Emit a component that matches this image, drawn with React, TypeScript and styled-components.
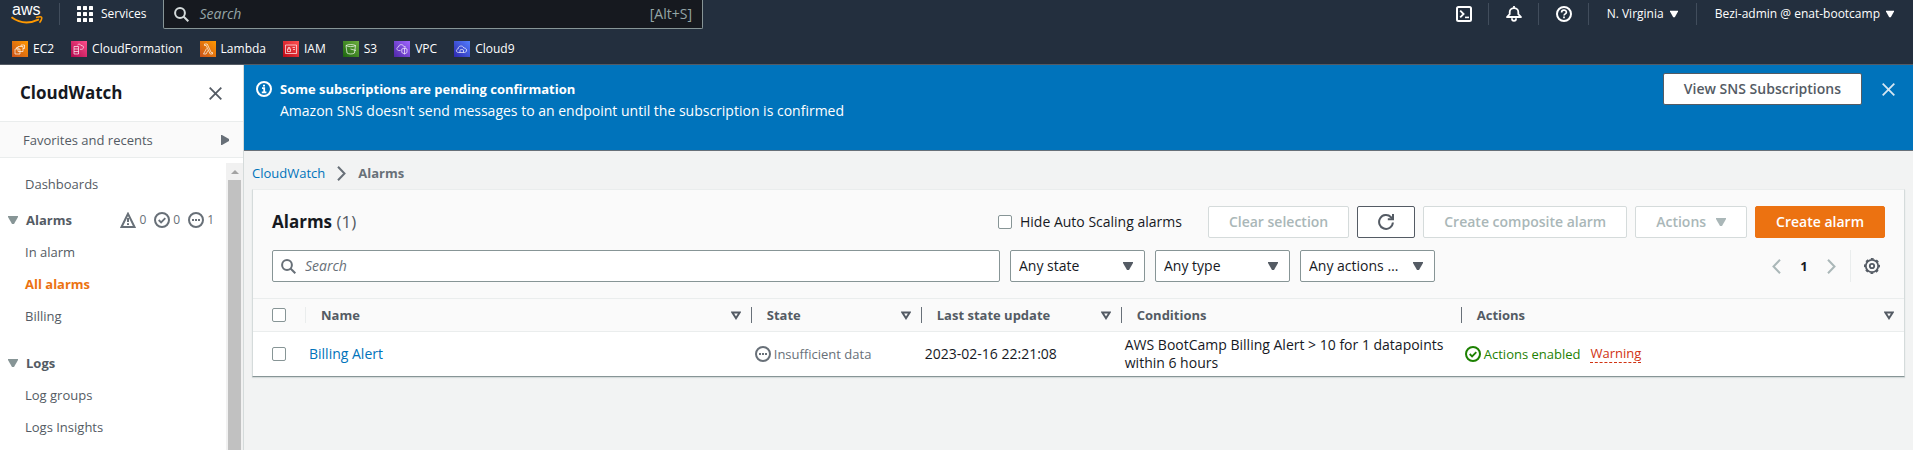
import React from "react";
import styled, { createGlobalStyle, css } from "styled-components";

const font = '"Open Sans", "Noto Sans", sans-serif';

const GlobalStyle = createGlobalStyle`
  *, *::before, *::after { box-sizing: border-box; }
  body { margin: 0; background: #f2f3f3; color: #16191f; font: 14px/22px ${font}; }
  button, input, select { font: inherit; color: inherit; margin: 0; }
  button { cursor: pointer; }
  a { text-decoration: none; }
  svg { display: block; flex: none; }
`;

const Shell = styled.div`
  display: flex;
  flex-direction: column;
  min-height: 100vh;
`;

/* ---------- top navigation ---------- */

const TopNav = styled.header`
  background: #232f3e;
  color: #fff;
  border-bottom: 1px solid #545b64;
  font-size: 12px;
  line-height: 16px;
`;

const NavRow = styled.div`
  display: flex;
  justify-content: space-between;
  height: 32px;
`;

const NavSide = styled.div<{ $grow?: boolean }>`
  display: flex;
  align-items: flex-start;
  ${(p) => p.$grow && "flex: 0 1 703px; min-width: 0;"}
`;

const LogoLink = styled.a`
  display: flex;
  padding: 0 16px 0 11px;
`;

const NavButton = styled.button<{ $first?: boolean; $last?: boolean }>`
  display: flex;
  align-items: center;
  gap: 6px;
  height: 22px;
  margin: 3px 0 0;
  padding: 0 ${(p) => (p.$last ? 19 : 18)}px 0 18px;
  border: 0;
  border-left: ${(p) => (p.$first ? "0" : "1px solid #414d5c")};
  background: none;
  font-size: 12px;
  white-space: nowrap;
`;

const NavIconButton = styled(NavButton)`
  padding: 0 16px 0 17px;
`;

const ServicesButton = styled(NavButton)`
  gap: 8px;
  padding: 0 17px;
`;

const NavSearch = styled.label`
  display: flex;
  flex: 1;
  align-items: center;
  gap: 10px;
  height: 29px;
  padding: 0 10px;
  border: 1px solid #879596;
  border-top: 0;
  border-radius: 0 0 2px 2px;
  background: #16191f;
  color: #d5dbdb;
  min-width: 0;
`;

const NavSearchInput = styled.input`
  flex: 1;
  min-width: 0;
  padding: 0;
  border: 0;
  outline: 0;
  background: none;
  font-size: 14px;
  &::placeholder { color: #95a5a6; font-style: italic; opacity: 1; }
`;

const Shortcut = styled.span`
  color: #95a5a6;
  font-size: 14px;
`;

const Favorites = styled.nav`
  display: flex;
  gap: 17px;
  height: 32px;
  padding: 9px 12px 0;
`;

const Favorite = styled.a`
  display: flex;
  align-items: center;
  gap: 5px;
  height: 16px;
  color: #fff;
  font-size: 12px;
`;

/* ---------- side navigation ---------- */

const Body = styled.div`
  display: flex;
  flex: 1;
`;

const Sidebar = styled.aside`
  display: flex;
  flex-direction: column;
  flex: 0 0 244px;
  border-right: 1px solid #d5dbdb;
  background: #fff;
  color: #545b64;
`;

const SideHeader = styled.div`
  display: flex;
  align-items: center;
  justify-content: space-between;
  height: 57px;
  padding: 0 21px 0 20px;
  border-bottom: 1px solid #eaeded;
`;

const SideTitle = styled.h2`
  margin: 0;
  color: #16191f;
  font-size: 17px;
  font-weight: 700;
`;

const IconButton = styled.button<{ $color?: string }>`
  display: flex;
  padding: 0;
  border: 0;
  background: none;
  color: ${(p) => p.$color || "#545b64"};
`;

const FavoritesButton = styled.button`
  display: flex;
  align-items: center;
  justify-content: space-between;
  height: 36px;
  padding: 0 14px 0 23px;
  border: 0;
  border-bottom: 1px solid #eaeded;
  background: #fafafa;
  font-size: 13px;
`;

const SideScroll = styled.div`
  display: flex;
  flex: 1;
  padding-top: 5px;
`;

const SideList = styled.nav`
  flex: 1;
  padding-top: 10px;
  font-size: 13px;
`;

const SideLink = styled.a<{ $active?: boolean; $space?: number }>`
  display: block;
  height: 22px;
  margin: 0 0 ${(p) => p.$space ?? 10}px 25px;
  color: ${(p) => (p.$active ? "#ec7211" : "#545b64")};
  font-weight: ${(p) => (p.$active ? 700 : 400)};
`;

const SideSection = styled.div`
  display: flex;
  align-items: center;
  height: 22px;
  margin-bottom: 10px;
  padding: 0 12px 0 8px;
`;

const SideSectionButton = styled.button`
  display: flex;
  align-items: center;
  gap: 8px;
  margin-right: auto;
  padding: 0;
  border: 0;
  background: none;
  font-weight: 700;
`;

const Counts = styled.div`
  display: flex;
  gap: 8px;
`;

const Count = styled.span`
  display: flex;
  align-items: center;
  gap: 3px;
  color: #687078;
  font-size: 12px;
`;

const ScrollTrack = styled.div`
  display: flex;
  flex-direction: column;
  width: 17px;
  padding: 0 2px;
  background: #f1f1f1;
`;

const ScrollArrow = styled.div`
  display: flex;
  align-items: center;
  justify-content: center;
  height: 17px;
`;

const ScrollThumb = styled.div`
  flex: 1;
  background: #c1c1c1;
`;

/* ---------- main area ---------- */

const Main = styled.main`
  flex: 1;
  min-width: 0;
`;

const Flash = styled.section`
  display: flex;
  align-items: flex-start;
  gap: 8px;
  min-height: 86px;
  padding: 8px 18px 8px 12px;
  border-bottom: 1px solid #687078;
  background: #0073bb;
  color: #fff;
`;

const FlashIcon = styled.span`
  padding-top: 8px;
`;

const FlashText = styled.div`
  flex: 1;
  padding-top: 5px;
`;

const FlashTitle = styled.div`
  font-size: 13px;
  font-weight: 700;
`;

const FlashAside = styled.div`
  display: flex;
  align-items: center;
  gap: 20px;
`;

const buttonTone = {
  normal: css`border-color: #545b64; background: #fff; color: #545b64;`,
  disabled: css`border-color: #d5dbdb; background: #fff; color: #aab7b8;`,
  primary: css`border-color: #ec7211; background: #ec7211; color: #fff;`,
};

const Button = styled.button<{ $tone?: keyof typeof buttonTone }>`
  display: flex;
  align-items: center;
  gap: 10px;
  height: 32px;
  padding: 0 20px;
  border: 1px solid;
  border-radius: 2px;
  font-weight: 600;
  white-space: nowrap;
  ${(p) => buttonTone[p.$tone || "normal"]}
`;

const Breadcrumbs = styled.nav`
  display: flex;
  align-items: center;
  gap: 12px;
  height: 38px;
  padding: 6px 8px 0;
  color: #687078;
  font-size: 13px;
`;

const Link = styled.a`
  color: #0073bb;
`;

const Crumb = styled.span`
  font-weight: 700;
`;

const Panel = styled.section`
  margin: 0 8px 0;
  border: 1px solid #d5dbdb;
  border-top-color: #eaeded;
  border-bottom-color: #879596;
  background: #fafafa;
  box-shadow: 0 1px 1px #d5dbdb;
`;

const PanelHeader = styled.div`
  display: flex;
  align-items: center;
  flex-wrap: wrap;
  gap: 8px;
  padding: 16px 19px 0;
`;

const PanelTitle = styled.h1`
  margin: 0 auto 0 0;
  font-size: 17px;
  font-weight: 700;
`;

const Counter = styled.span`
  color: #545b64;
  font-weight: 400;
`;

const CheckLabel = styled.label`
  display: flex;
  align-items: center;
  gap: 8px;
  margin-right: 18px;
`;

const Checkbox = styled.input.attrs({ type: "checkbox" })`
  appearance: none;
  display: block;
  width: 14px;
  height: 14px;
  border: 1px solid #879596;
  border-radius: 2px;
  background: #fff;
  &:checked { background: #0073bb; }
`;

const FilterRow = styled.div`
  display: flex;
  align-items: center;
  gap: 10px;
  padding: 12px 19px 16px;
`;

const SearchBox = styled.label`
  display: flex;
  flex: 0 1 728px;
  align-items: center;
  gap: 9px;
  height: 32px;
  padding: 0 8px;
  border: 1px solid #879596;
  border-radius: 2px;
  background: #fff;
  color: #687078;
`;

const SearchInput = styled.input`
  flex: 1;
  min-width: 0;
  padding: 0;
  border: 0;
  outline: 0;
  background: none;
  font-size: 14px;
  &::placeholder { color: #687078; font-style: italic; opacity: 1; }
`;

const SelectBox = styled.div`
  display: grid;
  grid-template-columns: 1fr 22px;
  align-items: center;
  flex: 0 0 135px;
  height: 32px;
  color: #545b64;
`;

const Select = styled.select`
  grid-area: 1 / 1 / 2 / 3;
  appearance: none;
  width: 100%;
  height: 32px;
  padding: 0 24px 0 8px;
  border: 1px solid #879596;
  border-radius: 2px;
  background: #fff;
  color: #16191f;
`;

const SelectCaret = styled.span`
  grid-area: 1 / 2 / 2 / 3;
  pointer-events: none;
  z-index: 1;
`;

const Pager = styled.div`
  display: flex;
  align-items: center;
  margin-left: auto;
  height: 32px;
`;

const PageNumber = styled.button`
  width: 46px;
  padding: 0;
  border: 0;
  background: none;
  font-size: 13px;
  font-weight: 700;
`;

const PagerSettings = styled.div`
  display: flex;
  align-items: center;
  height: 32px;
  margin-left: 14px;
  padding: 0 5px 0 13px;
  border-left: 1px solid #eaeded;
`;

const Table = styled.table`
  width: 100%;
  border-collapse: collapse;
  table-layout: fixed;
`;

const HeadCell = styled.th<{ $width?: string }>`
  width: ${(p) => p.$width || "auto"};
  height: 33px;
  padding: 0;
  border: solid #eaeded;
  border-width: 1px 0;
  color: #545b64;
  font-size: 13px;
  font-weight: 700;
  text-align: left;
`;

const HeadContent = styled.div<{ $line: string }>`
  display: flex;
  align-items: center;
  justify-content: space-between;
  height: 16px;
  padding: 0 10px 0 15px;
  border-left: 1px solid ${(p) => p.$line};
`;

const Cell = styled.td`
  height: 44px;
  padding: 0 4px;
  background: #fff;
  line-height: 18px;
`;

const CheckCell = styled(Cell)`
  padding: 0 19px;
`;

const CheckHead = styled(HeadCell)`
  padding: 0 19px;
`;

const StatusRow = styled.div`
  display: flex;
  align-items: center;
  gap: 10px;
  padding-top: 1px;
`;

const Status = styled.span<{ $color: string }>`
  display: flex;
  align-items: center;
  gap: 3px;
  color: ${(p) => p.$color};
  font-size: 13px;
`;

const Warning = styled.button`
  height: 18px;
  padding: 0;
  border: 0;
  border-bottom: 1px dashed #d13212;
  background: none;
  color: #d13212;
  font-size: 13px;
  line-height: 17px;
`;

/* ---------- icons ---------- */

const Caret = ({ size = 10, color = "currentColor" }: { size?: number; color?: string }) => (
  <svg width={size} height={size} viewBox="0 0 10 10" fill={color}>
    <path d="M0 1h10v1L6 9H4L0 2z" />
  </svg>
);

const Close = () => (
  <svg width="13" height="13" viewBox="0 0 13 13" stroke="currentColor" strokeWidth="1.8" fill="none">
    <path d="M.7.7l11.6 11.6M12.3.7L.7 12.3" />
  </svg>
);

const Magnifier = () => (
  <svg width="15" height="15" viewBox="0 0 15 15" stroke="currentColor" strokeWidth="2" fill="none">
    <circle cx="6" cy="6" r="4.9" />
    <path d="M9.5 9.5l4.8 4.8" />
  </svg>
);

const Ring = ({ children }: { children: React.ReactNode }) => (
  <svg width="16" height="16" viewBox="0 0 16 16" stroke="currentColor" strokeWidth="2" fill="none">
    <circle cx="8" cy="8" r="7" />
    {children}
  </svg>
);

const InfoIcon = () => (
  <Ring>
    <path d="M6 7.2h2.2v4.3M5.8 11.4h4.6M7 4.6h2" strokeWidth="1.8" />
  </Ring>
);
const HelpIcon = () => (
  <Ring>
    <path d="M5.6 6.4c0-3 4.8-3 4.8-.2 0 1.7-2.4 1.6-2.4 3.4M8 10.6v1.7" strokeWidth="1.7" />
  </Ring>
);
const CheckIcon = () => (
  <Ring>
    <path d="M4.7 8l2.4 2.4 4.2-4.3" strokeWidth="1.8" />
  </Ring>
);
const DotsIcon = () => (
  <Ring>
    <path d="M4 8h2M7 8h2M10 8h2" />
  </Ring>
);
const AlertIcon = () => (
  <svg width="16" height="16" viewBox="0 0 16 16" stroke="currentColor" strokeWidth="2" fill="none">
    <path d="M8 1.8L1.5 15h13z" />
    <path d="M8 6v4M8 11.3v1.7" />
  </svg>
);
const TerminalIcon = () => (
  <svg width="16" height="16" viewBox="0 0 16 16" stroke="currentColor" strokeWidth="2" fill="none">
    <rect x="1" y="1" width="14" height="14" rx="1.5" />
    <path d="M4.2 4.6L7.6 8l-3.4 3.4" strokeWidth="1.8" />
    <path d="M9 11.4h4" strokeWidth="1.6" />
  </svg>
);
const BellIcon = () => (
  <svg width="16" height="16" viewBox="0 0 16 16" stroke="currentColor" strokeWidth="1.8" fill="none">
    <path d="M8 0v2M1 11h14L12.300 8.200V6C12.300 3.600 10.200 2.200 8 2.200S3.700 3.600 3.700 6v2.200z" strokeLinejoin="round" />
    <path d="M5.900 12.200c0 3.600 4.200 3.600 4.200 0" />
  </svg>
);
const RefreshIcon = () => (
  <svg width="16" height="16" viewBox="0 0 16 16" stroke="currentColor" strokeWidth="2" fill="none">
    <path d="M14.900 8.500A6.900 6.900 0 1 1 13 3.200l1.500 1.700" />
    <path d="M15 0v5.200H9.800" />
  </svg>
);
const GearIcon = () => (
  <svg width="16" height="16" viewBox="0 0 16 16" stroke="currentColor" fill="none">
    <circle cx="8" cy="8" r="6.200" strokeWidth="1.800" />
    <circle cx="8" cy="8" r="7.200" strokeWidth="1.600" strokeDasharray="2.830 2.830" strokeDashoffset="1.400" />
    <circle cx="8" cy="8" r="2.200" strokeWidth="1.800" />
  </svg>
);
const Chevron = ({ left }: { left?: boolean }) => (
  <svg width="9" height="15" viewBox="0 0 9 15" stroke="currentColor" strokeWidth="2" fill="none">
    <path d={left ? "M8 .7L1.500 7.500 8 14.300" : "M1 .7l6.500 6.800L1 14.300"} />
  </svg>
);
const SortIcon = () => (
  <svg width="10" height="9" viewBox="0 0 10 9" stroke="currentColor" strokeWidth="2" fill="none">
    <path d="M1.300 1.500h7.400L5 7.200z" />
  </svg>
);
const RightCaret = () => (
  <svg width="8" height="10" viewBox="0 0 8 10" fill="#687078">
    <path d="M0 0h1l7 4v2l-7 4H0z" />
  </svg>
);
const GridIcon = () => (
  <svg width="16" height="16" viewBox="0 0 16 16" fill="#fff">
    {[0, 6, 12].map((y) => [0, 6, 12].map((x) => <rect key={`${x}-${y}`} x={x} y={y} width="4" height="4" rx=".5" />))}
  </svg>
);
const AwsLogo = () => (
  <svg width="32" height="28" viewBox="0 0 32 28" fill="none">
    <text x="1" y="15" fontSize="16" fontFamily="Liberation Sans, sans-serif" fill="#fff">
      aws
    </text>
    <path d="M.5 17.200c8.500 6.300 18.500 6.500 27.500 2.200" stroke="#f90" strokeWidth="2" />
    <path d="M25 17.500c3-.9 5.300-.8 5.700-.1s-.5 3.500-2.200 5.200" stroke="#f90" strokeWidth="1.500" />
  </svg>
);

const services: { name: string; from: string; to: string; art: React.ReactNode }[] = [
  { name: "EC2", from: "#c8511b", to: "#f90", art: <path d="M3 8h5v5H3zM6 5.500h5v5H6zM9 5.500V4h3.500v3.500H11M4.500 8V6.500H6" /> },
  { name: "CloudFormation", from: "#b0084d", to: "#ff4f8b", art: <path d="M3 5.500h4.500v7.500H3zM3 8h4.500M3 10.500h4.500M6.500 4c1-1.300 3-1 3.500.5 3 0 3.500 3 .8 3.800H9" /> },
  { name: "Lambda", from: "#c8511b", to: "#f90", art: <path d="M4.500 3h2.700l4 8.500h1.300V13h-2.300l-4-8.500H4.500zM6.500 7.500L3.500 13h2.600l1.800-3.500" /> },
  { name: "IAM", from: "#bd0816", to: "#ff5252", art: <path d="M2.500 4h11v8.500h-11zM4.500 8h3v2.500h-3zM5.200 8V6.500h1.700V8M9.500 6.500h2.500M10 8.500h2" /> },
  { name: "S3", from: "#1b660f", to: "#6cae3e", art: <path d="M3 4.500c2-1.300 7.500-1.300 9.500 0l-1 7.500c-2 1.300-5.500 1.300-7.500 0zM3 4.500c2 1.500 7.500 1.500 9.500 0M7.500 8l5.500 1.500" /> },
  { name: "VPC", from: "#4d27a8", to: "#a166ff", art: <path d="M6.500 9.500H4.500C2.300 9 2.300 6.300 4.500 6 4.800 3 9 3 9.500 5.200l2.500 1M7.800 8l2.700-1L13 8v3.500L10.500 13l-2.700-1.500zM10.500 7v6" /> },
  { name: "Cloud9", from: "#2e27ad", to: "#527fff", art: <path d="M4.500 11.500c-2.700 0-2.700-3.300-.3-3.700C4 4.500 9 4 9.800 7c3.500-.3 3.700 4.300.7 4.500zM6 11.500V9.200c0-.9 3.500-.9 3.500 0v2.300" /> },
];

const ServiceIcon = ({ name, from, to, art }: (typeof services)[number]) => (
  <svg width="16" height="16" viewBox="0 0 16 16" fill="none" stroke="#fff" strokeWidth=".8" strokeOpacity=".85">
    <defs>
      <linearGradient id={`g-${name}`} x1="0" y1="1" x2="1" y2="0">
        <stop stopColor={from} />
        <stop offset="1" stopColor={to} />
      </linearGradient>
    </defs>
    <rect width="16" height="16" fill={`url(#g-${name})`} stroke="none" />
    {art}
  </svg>
);

/* ---------- page ---------- */

const filters = [
  { label: "Alarm state", value: "Any state" },
  { label: "Alarm type", value: "Any type" },
  { label: "Alarm actions", value: "Any actions …" },
];

const columns = [
  { name: "Name", width: "27%", line: "#eaeded" },
  { name: "State", width: "170px", line: "#687078" },
  { name: "Last state update", width: "200px", line: "#687078" },
  { name: "Conditions", width: "340px", line: "#687078", fixed: true },
  { name: "Actions", line: "#687078" },
];

export default function App() {
  return (
    <Shell>
      <GlobalStyle />
      <TopNav>
        <NavRow>
          <NavSide $grow>
            <LogoLink href="#" aria-label="AWS home">
              <AwsLogo />
            </LogoLink>
            <ServicesButton>
              <GridIcon />
              Services
            </ServicesButton>
            <NavSearch>
              <Magnifier />
              <NavSearchInput placeholder="Search" aria-label="Search services" />
              <Shortcut>[Alt+S]</Shortcut>
            </NavSearch>
          </NavSide>
          <NavSide>
            <NavIconButton $first aria-label="CloudShell">
              <TerminalIcon />
            </NavIconButton>
            <NavIconButton aria-label="Notifications">
              <BellIcon />
            </NavIconButton>
            <NavIconButton aria-label="Help">
              <HelpIcon />
            </NavIconButton>
            <NavButton>
              N. Virginia
              <Caret size={8} />
            </NavButton>
            <NavButton $last>
              Bezi-admin @ enat-bootcamp
              <Caret size={8} />
            </NavButton>
          </NavSide>
        </NavRow>
        <Favorites aria-label="Favorites">
          {services.map((s) => (
            <Favorite key={s.name} href="#">
              <ServiceIcon {...s} />
              {s.name}
            </Favorite>
          ))}
        </Favorites>
      </TopNav>
      <Body>
        <Sidebar>
          <SideHeader>
            <SideTitle>CloudWatch</SideTitle>
            <IconButton aria-label="Close navigation">
              <Close />
            </IconButton>
          </SideHeader>
          <FavoritesButton>
            Favorites and recents
            <RightCaret />
          </FavoritesButton>
          <SideScroll>
            <SideList aria-label="CloudWatch">
              <SideLink href="#" $space={14}>Dashboards</SideLink>
              <SideSection>
                <SideSectionButton>
                  <Caret color="#879596" />
                  Alarms
                </SideSectionButton>
                <Counts>
                  <Count><AlertIcon />0</Count>
                  <Count><CheckIcon />0</Count>
                  <Count><DotsIcon />1</Count>
                </Counts>
              </SideSection>
              <SideLink href="#">In alarm</SideLink>
              <SideLink href="#" $active>All alarms</SideLink>
              <SideLink href="#" $space={25}>Billing</SideLink>
              <SideSection>
                <SideSectionButton>
                  <Caret color="#879596" />
                  Logs
                </SideSectionButton>
              </SideSection>
              <SideLink href="#">Log groups</SideLink>
              <SideLink href="#" $space={0}>Logs Insights</SideLink>
            </SideList>
            <ScrollTrack>
              <ScrollArrow>
                <svg width="8" height="4" viewBox="0 0 8 4" fill="#a3a3a3"><path d="M4 0l4 4H0z" /></svg>
              </ScrollArrow>
              <ScrollThumb />
            </ScrollTrack>
          </SideScroll>
        </Sidebar>
        <Main>
          <Flash>
            <FlashIcon><InfoIcon /></FlashIcon>
            <FlashText>
              <FlashTitle>Some subscriptions are pending confirmation</FlashTitle>
              Amazon SNS doesn't send messages to an endpoint until the subscription is confirmed
            </FlashText>
            <FlashAside>
              <Button>View SNS Subscriptions</Button>
              <IconButton $color="#d5e6f2" aria-label="Dismiss">
                <Close />
              </IconButton>
            </FlashAside>
          </Flash>
          <Breadcrumbs aria-label="Breadcrumbs">
            <Link href="#">CloudWatch</Link>
            <Chevron />
            <Crumb>Alarms</Crumb>
          </Breadcrumbs>
          <Panel>
            <PanelHeader>
              <PanelTitle>
                Alarms <Counter>(1)</Counter>
              </PanelTitle>
              <CheckLabel>
                <Checkbox />
                Hide Auto Scaling alarms
              </CheckLabel>
              <Button $tone="disabled" disabled>Clear selection</Button>
              <Button aria-label="Refresh"><RefreshIcon /></Button>
              <Button $tone="disabled" disabled>Create composite alarm</Button>
              <Button $tone="disabled" disabled>
                Actions
                <Caret />
              </Button>
              <Button $tone="primary">Create alarm</Button>
            </PanelHeader>
            <FilterRow>
              <SearchBox>
                <Magnifier />
                <SearchInput placeholder="Search" aria-label="Search alarms" />
              </SearchBox>
              {filters.map((f) => (
                <SelectBox key={f.label}>
                  <Select aria-label={f.label}>
                    <option>{f.value}</option>
                  </Select>
                  <SelectCaret><Caret /></SelectCaret>
                </SelectBox>
              ))}
              <Pager>
                <IconButton $color="#aab7b8" aria-label="Previous page"><Chevron left /></IconButton>
                <PageNumber>1</PageNumber>
                <IconButton $color="#aab7b8" aria-label="Next page"><Chevron /></IconButton>
                <PagerSettings>
                  <IconButton aria-label="Preferences"><GearIcon /></IconButton>
                </PagerSettings>
              </Pager>
            </FilterRow>
            <Table>
              <thead>
                <tr>
                  <CheckHead $width="52px"><Checkbox aria-label="Select all alarms" /></CheckHead>
                  {columns.map((c) => (
                    <HeadCell key={c.name} $width={c.width}>
                      <HeadContent $line={c.line}>
                        {c.name}
                        {!c.fixed && <SortIcon />}
                      </HeadContent>
                    </HeadCell>
                  ))}
                </tr>
              </thead>
              <tbody>
                <tr>
                  <CheckCell><Checkbox aria-label="Select Billing Alert" /></CheckCell>
                  <Cell><Link href="#">Billing Alert</Link></Cell>
                  <Cell>
                    <StatusRow>
                      <Status $color="#687078"><DotsIcon />Insufficient data</Status>
                    </StatusRow>
                  </Cell>
                  <Cell>2023-02-16 22:21:08</Cell>
                  <Cell>AWS BootCamp Billing Alert &gt; 10 for 1 datapoints within 6 hours</Cell>
                  <Cell>
                    <StatusRow>
                      <Status $color="#1d8102"><CheckIcon />Actions enabled</Status>
                      <Warning>Warning</Warning>
                    </StatusRow>
                  </Cell>
                </tr>
              </tbody>
            </Table>
          </Panel>
        </Main>
      </Body>
    </Shell>
  );
}
